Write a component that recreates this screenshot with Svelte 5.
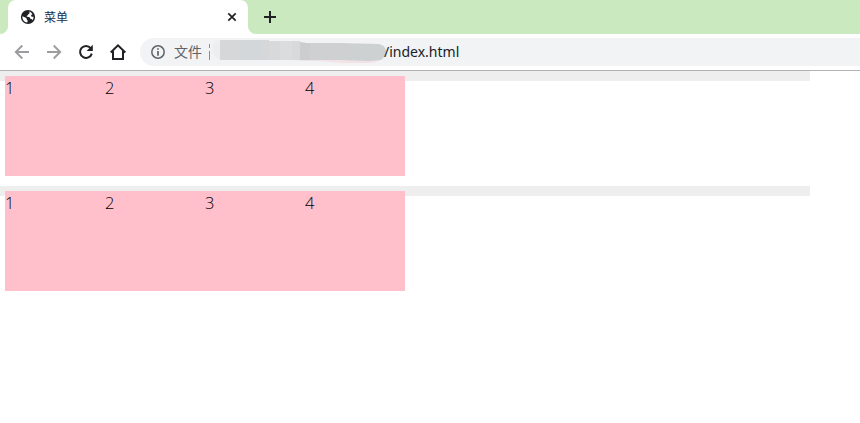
<script>
  const rows = [[1, 2, 3, 4], [1, 2, 3, 4]];
</script>

<div class="window">
  <header class="tabs">
    <div class="tab">
      <svg class="globe" width="16" height="16" viewBox="0 0 16 16">
        <circle cx="8" cy="8" r="7.1" fill="#202124" />
        <path d="M8.6 2.5 C10 3 9.8 4.4 8.7 4.9 C7.5 5.4 8.2 6.5 6.8 6.8 C6.3 7.5 6.8 8 8.8 7.9 C10.4 8 9.6 9.6 10.8 9.9 C12 9.9 12.2 10.5 12.4 11.2 C13.3 10.2 13.6 9 13.4 7.5 C12.4 8.2 11.2 7.7 11.1 6.7 C11.1 5.8 11.8 5.6 12.5 5.2 C11.6 3.7 10.3 2.7 8.6 2.5Z" fill="#fff" />
        <path d="M2.4 7.2 C4 7.8 5.8 8.4 6.5 9.2 C7 10 6.4 10.7 7.5 11.3 C8 11.8 7.5 12.6 7.2 13.5 C4.2 13.2 2 10.3 2.4 7.2Z" fill="#fff" />
      </svg>
      <span class="title">菜单</span>
      <svg class="close" width="10" height="10" viewBox="0 0 10 10"><path d="M1.3 1.3L8.7 8.7M8.7 1.3L1.3 8.7" stroke="#202124" stroke-width="1.7" /></svg>
    </div>
    <svg class="plus" width="12" height="12" viewBox="0 0 12 12"><path d="M6 0V12M0 6H12" stroke="#202124" stroke-width="2" /></svg>
  </header>
  <nav class="toolbar">
    <svg width="16" height="16" viewBox="0 0 16 16" fill="none" stroke="#9b9c9e" stroke-width="1.9"><path d="M15 8H2.5M8.3 1.5L1.8 8L8.3 14.5" /></svg>
    <svg width="16" height="16" viewBox="0 0 16 16" fill="none" stroke="#9b9c9e" stroke-width="1.9"><path d="M1 8H13.5M7.7 1.5L14.2 8L7.7 14.5" /></svg>
    <svg width="16" height="16" viewBox="0 0 16 16"><path d="M12.7 4.1A6 6 0 1 0 13.8 9.6" fill="none" stroke="#202124" stroke-width="2" /><path d="M14.8 .8V7H8.6Z" fill="#202124" /></svg>
    <svg width="18" height="16" viewBox="0 0 18 16" fill="none" stroke="#202124" stroke-width="2"><path d="M1.7 8.5L9 1.4L16.3 8.5M4 7V15H14V7" /></svg>
    <div class="omnibox">
      <svg class="info" width="14" height="14" viewBox="0 0 14 14"><circle cx="7" cy="7" r="6.2" fill="none" stroke="#5f6368" stroke-width="1.5" /><path d="M7 3.2V4.8M7 6V10.8" stroke="#5f6368" stroke-width="1.7" /></svg>
      <span class="scheme">文件</span>
      <svg class="smudge" width="178" height="28" viewBox="0 0 178 28">
        <path d="M.5 6V10M.5 13V22" stroke="#8a8d91" />
        <path d="M10 2Q3 5 3 11T11 22V2Z" fill="#eceeef" />
        <path d="M78 21H172Q168 25 158 25H132L110 23H94Z" fill="#f3e3e6" />
        <path d="M11 2H60V22H11Z" fill="#d6d7d8" />
        <path d="M31 2H52V22H31Z" fill="#d3d7da" />
        <path d="M60 3H91V22H60Z" fill="#d8d9da" />
        <path d="M71 3H83V22H71Z" fill="#dadcdd" />
        <path d="M91 4L98 5H131V22H91Z" fill="#cbcdce" />
        <path d="M101 5H131V22H101Z" fill="#ced0d1" />
        <path d="M131 5L170 6Q177 8 177 13T172 22L160 23L131 22Z" fill="#cdd1d2" />
      </svg>
      <span class="path">/index.html</span>
    </div>
  </nav>
  <main>
    {#each rows as row}
      <ul>
        {#each row as item}<li>{item}</li>{/each}
      </ul>
    {/each}
  </main>
</div>

<style>
  .window { width: 100%; height: 423px; overflow: hidden; background: #fff; font-family: "Noto Sans", "Noto Sans CJK SC", sans-serif; }
  .tabs { display: flex; align-items: center; height: 34px; padding-left: 8px; background: #cbe9bf; }
  .tab { position: relative; box-sizing: border-box; display: flex; align-items: center; width: 240px; height: 34px; padding: 0 11px 0 12px; background: #fff; border-radius: 8px 8px 0 0; }
  .tab::before, .tab::after { content: ""; position: absolute; bottom: 0; width: 8px; height: 8px; }
  .tab::before { left: -8px; background: radial-gradient(circle at 0 0, transparent 7.5px, #fff 8.5px); }
  .tab::after { right: -8px; background: radial-gradient(circle at 100% 0, transparent 7.5px, #fff 8.5px); }
  .title { flex: 1; margin-left: 8px; font: 12px/18px "Noto Sans CJK SC", sans-serif; color: #20304c; }
  .plus { margin-left: 16px; }
  .toolbar { display: flex; align-items: center; box-sizing: border-box; height: 37px; padding-left: 14px; border-bottom: 1px solid #b2b2b2; }
  .toolbar > svg { flex: none; margin-right: 16px; }
  .toolbar > svg:nth-of-type(3) { margin-right: 15px; }
  .toolbar > svg:nth-of-type(4) { margin-right: 13px; }
  .omnibox { flex: 1; display: flex; align-items: center; height: 28px; padding-left: 11px; background: #f1f3f4; border-radius: 14px 0 0 14px; white-space: nowrap; }
  .scheme { width: 28px; margin-left: 9px; padding-bottom: 2px; font: 14px/20px "Noto Sans CJK SC", sans-serif; color: #5f6368; }
  .smudge { margin-left: 7px; }
  .path { margin-left: -3px; padding-bottom: 1px; font: 14px/20px "Noto Sans", sans-serif; color: #202124; }
  ul { display: flex; box-sizing: border-box; width: 810px; height: 10px; margin: 0 0 105px; padding: 5px; background: #eee; list-style: none; }
  li { flex: none; width: 100px; height: 100px; background: #ffc0cb; color: #000; font: 300 16.5px/23px "Open Sans", sans-serif; }
</style>
